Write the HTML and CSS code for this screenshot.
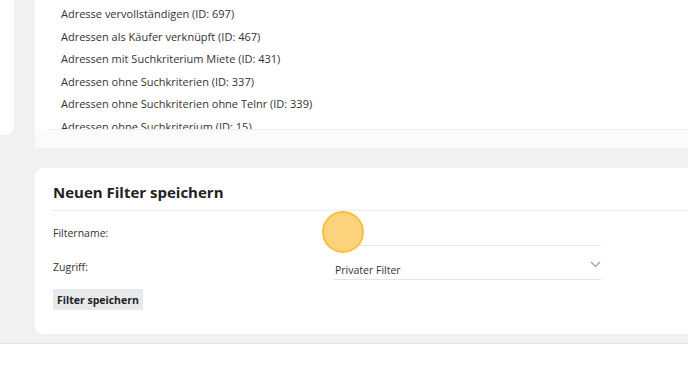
FILE: index.html
```html
<!DOCTYPE html>
<html lang="de">
<head>
  <meta charset="UTF-8">
  <title>Filter speichern</title>
  <link rel="stylesheet" href="styles.css">
</head>
<body>
  <div class="page">
    <div class="top-row">
      <div class="sidebar"></div>
      <div class="card list-card">
        <ul class="filter-list">
          <li>Adresse vervollständigen (ID: 697)</li>
          <li>Adressen als Käufer verknüpft (ID: 467)</li>
          <li>Adressen mit Suchkriterium Miete (ID: 431)</li>
          <li>Adressen ohne Suchkriterien (ID: 337)</li>
          <li>Adressen ohne Suchkriterien ohne Telnr (ID: 339)</li>
          <li>Adressen ohne Suchkriterium (ID: 15)</li>
        </ul>
        <div class="list-foot"></div>
      </div>
    </div>

    <div class="card save-card">
      <h2>Neuen Filter speichern</h2>
      <div class="form">
        <div class="form-row">
          <label>Filtername:</label>
          <div class="field">
            <input type="text" class="text-input">
            <span class="click-dot"></span>
          </div>
        </div>
        <div class="form-row">
          <label>Zugriff:</label>
          <div class="field select">
            <span>Privater Filter</span>
            <svg class="chevron" width="11" height="7" viewBox="0 0 11 7"><path d="M1 1l4.5 4.5L10 1" fill="none" stroke="#999" stroke-width="1.2"/></svg>
          </div>
        </div>
        <button class="save-btn">Filter speichern</button>
      </div>
    </div>

    <div class="footer"></div>
  </div>
</body>
</html>
```

FILE: styles.css
```css
body {
  margin: 0;
  background: #fff;
  font-family: "Open Sans", "Noto Sans", sans-serif;
  color: #333;
}
.page {
  background: #f0f1f3;
  width: 688px;
  height: 343px;
  overflow: hidden;
  border-bottom: 1px solid #e2e3e5;
}
.top-row {
  display: flex;
  align-items: flex-start;
}
.sidebar {
  width: 14px;
  height: 135px;
  background: #fff;
  border-bottom-right-radius: 8px;
}
.card {
  background: #fff;
}
.list-card {
  margin-left: 21px;
  flex: 1;
  height: 148px;
  border-bottom-left-radius: 8px;
}
.filter-list {
  list-style: none;
  margin: 0 0 0 13px;
  padding: 3px 0 0 13px;
  height: 126px;
  overflow: hidden;
  border-bottom: 1px solid #ececec;
}
.filter-list li {
  font-size: 11px;
  line-height: 22.6px;
}
.list-foot {
  height: 18px;
  background: #fbfbfb;
}
.save-card {
  margin: 20px 0 0 35px;
  height: 166px;
  border-radius: 8px 0 0 8px;
}
.save-card h2 {
  margin: 0 0 0 17px;
  padding: 14px 0 8px 1px;
  font-size: 15px;
  font-weight: 700;
  color: #222;
  border-bottom: 1px solid #eeeeee;
}
.form {
  padding: 1px 0 0 18px;
}
.form-row {
  display: flex;
  align-items: flex-end;
  height: 34px;
}
.form-row label {
  width: 280px;
  font-size: 10.5px;
  padding-bottom: 6px;
}
.field {
  position: relative;
  width: 268px;
  height: 26px;
  border-bottom: 1px solid #e4e4e4;
}
.text-input {
  border: none;
  outline: none;
  width: 100%;
  height: 100%;
  background: transparent;
}
.click-dot {
  position: absolute;
  left: -11px;
  top: -8px;
  width: 42px;
  height: 42px;
  border-radius: 50%;
  background: rgba(253, 205, 110, 0.9);
  border: 2px solid #f5c23a;
  box-sizing: border-box;
}
.select {
  display: flex;
  align-items: flex-end;
  justify-content: space-between;
}
.select span {
  font-size: 10.5px;
  padding: 0 0 2px 2px;
}
.chevron {
  margin: 0 0 11px 0;
}
.save-btn {
  margin-top: 9px;
  border: none;
  background: #e8e9eb;
  font-family: inherit;
  font-size: 10.5px;
  font-weight: 700;
  color: #222;
  padding: 4px 4px;
  height: 21px;
}
```
